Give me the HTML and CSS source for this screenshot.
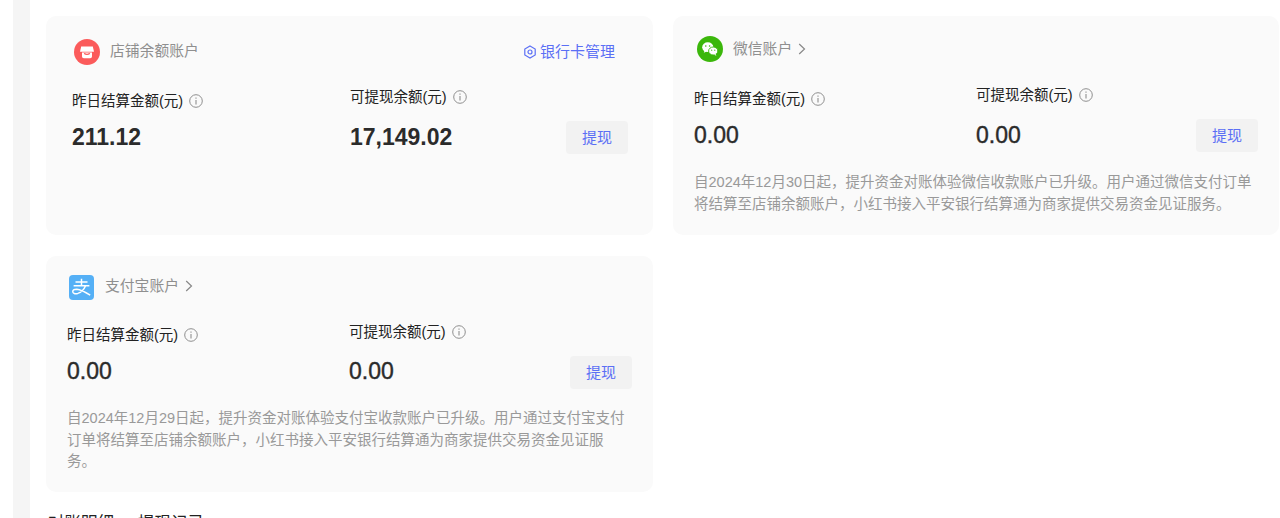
FILE: index.html
```html
<!DOCTYPE html>
<html lang="zh-CN">
<head>
<meta charset="utf-8" />
<title>账户</title>
<link rel="stylesheet" href="styles.css">
</head>
<body>
<div class="strip"></div>
<div class="main">
  <div class="cards">
    <!-- 店铺余额 -->
    <div class="card card-shop">
      <div class="head">
        <svg class="logo" viewBox="0 0 26 26"><circle cx="13" cy="13" r="13" fill="#fb5b5b"/><path d="M7.2 7.6h11.6l1.2 5.2H6z" fill="#fff"/><path d="M8 13.6h10v3.8q0 1.8-1.8 1.8H9.8Q8 19.2 8 17.4z" fill="#fff"/><path d="M10.2 14.4q2.8 2 5.6 0" fill="none" stroke="#fb5b5b" stroke-width="1.3"/></svg>
        <span class="title">店铺余额账户</span>
        <a class="manage"><svg class="gear" viewBox="0 0 14 14"><path d="M7 1l5.2 3v6L7 13l-5.2-3V4z" fill="none" stroke="#5b6ff5" stroke-width="1.2"/><circle cx="7" cy="7" r="2" fill="none" stroke="#5b6ff5" stroke-width="1.2"/></svg>银行卡管理</a>
      </div>
      <div class="stats">
        <div class="stat">
          <div class="label">昨日结算金额(元)<svg class="info" viewBox="0 0 14 14"><circle cx="7" cy="7" r="6.3" fill="none" stroke="#8f8f8f"/><path d="M7 6v4.4M7 3.6v1.2" stroke="#8f8f8f" stroke-width="1.1"/></svg></div>
          <div class="value">211.12</div>
        </div>
        <div class="stat stat-second">
          <div class="label">可提现余额(元)<svg class="info" viewBox="0 0 14 14"><circle cx="7" cy="7" r="6.3" fill="none" stroke="#8f8f8f"/><path d="M7 6v4.4M7 3.6v1.2" stroke="#8f8f8f" stroke-width="1.1"/></svg></div>
          <div class="value">17,149.02</div>
        </div>
        <a class="btn">提现</a>
      </div>
    </div>

    <!-- 微信 -->
    <div class="card card-wechat">
      <div class="head">
        <svg class="logo" viewBox="0 0 26 26"><circle cx="13" cy="13" r="13" fill="#3bb70b"/><ellipse cx="10.8" cy="11.2" rx="5.6" ry="4.9" fill="#fff"/><path d="M7.5 14.5l-.7 2.3 2.8-1.4z" fill="#fff"/><ellipse cx="16.2" cy="15" rx="4.6" ry="4" fill="#fff" stroke="#3bb70b" stroke-width=".9"/><path d="M18.6 18l.8 1.7-2.4-1z" fill="#fff"/><circle cx="8.8" cy="10" r=".8" fill="#3bb70b"/><circle cx="12.6" cy="10" r=".8" fill="#3bb70b"/><circle cx="14.7" cy="14.2" r=".6" fill="#3bb70b"/><circle cx="17.8" cy="14.2" r=".6" fill="#3bb70b"/></svg>
        <a class="title">微信账户<svg class="arrow" viewBox="0 0 8 12"><path d="M1.2 1l5.3 5-5.3 5" fill="none" stroke="#888" stroke-width="1.2"/></svg></a>
      </div>
      <div class="stats">
        <div class="stat">
          <div class="label">昨日结算金额(元)<svg class="info" viewBox="0 0 14 14"><circle cx="7" cy="7" r="6.3" fill="none" stroke="#8f8f8f"/><path d="M7 6v4.4M7 3.6v1.2" stroke="#8f8f8f" stroke-width="1.1"/></svg></div>
          <div class="value">0.00</div>
        </div>
        <div class="stat stat-second">
          <div class="label">可提现余额(元)<svg class="info" viewBox="0 0 14 14"><circle cx="7" cy="7" r="6.3" fill="none" stroke="#8f8f8f"/><path d="M7 6v4.4M7 3.6v1.2" stroke="#8f8f8f" stroke-width="1.1"/></svg></div>
          <div class="value">0.00</div>
        </div>
        <a class="btn">提现</a>
      </div>
      <p class="note">自2024年12月30日起，提升资金对账体验微信收款账户已升级。用户通过微信支付订单将结算至店铺余额账户，小红书接入平安银行结算通为商家提供交易资金见证服务。</p>
    </div>

    <!-- 支付宝 -->
    <div class="card card-alipay">
      <div class="head">
        <svg class="logo" viewBox="0 0 25 25"><rect width="25" height="25" rx="4" fill="#55b0f6"/><path d="M6.500 7h12M12.500 3.800v7M4.600 10.800h15.800M16.600 10.800q-2.600 6-7.800 7.600-4.600 1-5-1.400-.4-2.800 4-2.800 4.600.2 13.400 6" fill="none" stroke="#fff" stroke-width="1.500"/></svg>
        <a class="title">支付宝账户<svg class="arrow" viewBox="0 0 8 12"><path d="M1.2 1l5.3 5-5.3 5" fill="none" stroke="#888" stroke-width="1.2"/></svg></a>
      </div>
      <div class="stats">
        <div class="stat">
          <div class="label">昨日结算金额(元)<svg class="info" viewBox="0 0 14 14"><circle cx="7" cy="7" r="6.3" fill="none" stroke="#8f8f8f"/><path d="M7 6v4.4M7 3.6v1.2" stroke="#8f8f8f" stroke-width="1.1"/></svg></div>
          <div class="value">0.00</div>
        </div>
        <div class="stat stat-second">
          <div class="label">可提现余额(元)<svg class="info" viewBox="0 0 14 14"><circle cx="7" cy="7" r="6.3" fill="none" stroke="#8f8f8f"/><path d="M7 6v4.4M7 3.6v1.2" stroke="#8f8f8f" stroke-width="1.1"/></svg></div>
          <div class="value">0.00</div>
        </div>
        <a class="btn">提现</a>
      </div>
      <p class="note">自2024年12月29日起，提升资金对账体验支付宝收款账户已升级。用户通过支付宝支付订单将结算至店铺余额账户，小红书接入平安银行结算通为商家提供交易资金见证服务。</p>
    </div>
  </div>

  <div class="tabs">
    <a class="tab">对账明细</a>
    <a class="tab">提现记录</a>
  </div>
</div>
</body>
</html>
```

FILE: styles.css
```css
*{
	margin:0;
	padding:0;
	box-sizing:border-box;}
html,body{
	height:518px;
	overflow:hidden;
	background:#fff;}
body{
	display:flex;
	font-family:"Liberation Sans","Noto Sans CJK SC",sans-serif;
	font-size:14.5px;
	color:#222;}
.strip{
	width:17px;
	margin-left:13px;
	background:#f5f5f5;}
.main{
	flex:1;
	padding:16px 0 0 16px;}
.cards{
	display:grid;
	grid-template-columns:607px 606px;
	grid-template-rows:219px 236px;
	column-gap:20px;
	row-gap:21px;}
.card{
	background:#fafafa;
	border-radius:10px;}
.card-shop{padding:23px 25px 0 26px;}
.card-wechat{padding:20px 21px 0 21px;}
.card-alipay{padding:19px 21px 0 21px;}

.head{
	display:flex;
	align-items:center;}
.logo{
	width:26px;
	height:26px;
	flex:none;}
.card-shop .logo{margin:0 10px 0 2px;}
.card-wechat .logo{margin:0 10px 0 3px;}
.card-alipay .logo{width:25px;height:25px;margin:0 11px 0 2px;}
.title{
	display:flex;
	align-items:center;
	color:#8f8f8f;
	font-size:14.8px;
	line-height:20px;}
.card-shop .title{margin-top:-2px;}
.card-alipay .title{margin-top:-3px;}
.arrow{
	width:8px;
	height:12px;
	margin-left:6px;}
.manage{
	display:flex;
	align-items:center;
	margin-left:auto;
	margin-right:13px;
	color:#5b6ff5;
	font-size:15px;
	line-height:20px;}
.gear{
	width:14px;
	height:14px;
	margin-right:3px;}

.stats{
	display:flex;
	align-items:flex-end;}
.card-shop .stats{margin-top:22px;}
.card-wechat .stats{margin-top:23px;}
.card-alipay .stats{margin-top:22px;}
.stat{flex:none;}
.card-shop .stat{width:278px;}
.card-wechat .stat{width:282px;}
.card-alipay .stat{width:282px;}
.stat-second .label{margin-bottom:14px;}
.label{
	display:flex;
	align-items:center;
	font-size:14.5px;
	line-height:20px;
	margin-bottom:10px;
	color:#222;}
.card-alipay .stat-second .label{margin-bottom:13px;}
.card-shop .stat-second,.card-wechat .stat-second,.card-alipay .stat-second{
	flex:1;
	width:auto;}
.info{
	width:14px;
	height:14px;
	margin-left:6px;}
.value{
	font-size:23px;
	line-height:32px;
	font-weight:700;
	color:#2b2b2b;}
.card-wechat .value,.card-alipay .value{font-weight:400;-webkit-text-stroke:.4px #2b2b2b;}
.btn{
	display:block;
	flex:none;
	width:62px;
	height:33px;
	margin-bottom:-1px;
	background:#f2f2f2;
	border-radius:4px;
	color:#5b6ff5;
	font-size:15px;
	line-height:33px;
	text-align:center;}
.card-alipay .btn{margin-bottom:-2px;}
.note{
	margin-top:21px;
	font-size:14.5px;
	line-height:21.5px;
	color:#999;}
.tabs{
	display:flex;
	gap:24px;
	margin:19px 0 0 2px;}
.tab{
	font-size:16.5px;
	line-height:24px;
	color:#222;}
```
